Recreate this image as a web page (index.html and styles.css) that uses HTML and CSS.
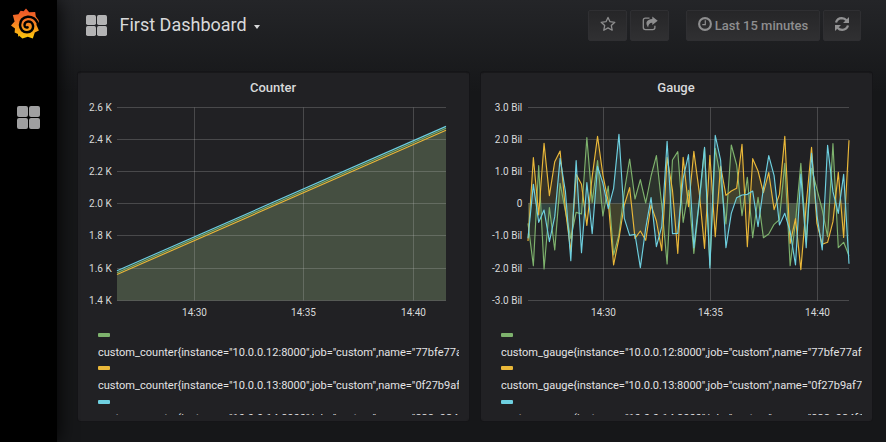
FILE: index.html
```html
<!DOCTYPE html>
<html lang="en">
<head>
<meta charset="utf-8">
<title>First Dashboard</title>
<link rel="stylesheet" href="styles.css">
</head>
<body>
<div class="app">
  <aside class="sidebar">
    <svg class="logo" viewBox="0 0 30 32" width="30" height="32">
      <defs>
        <linearGradient id="flame" x1="0" y1="0" x2="0" y2="1">
          <stop offset="0.1" stop-color="#f05a28"/>
          <stop offset="0.45" stop-color="#f47b26"/>
          <stop offset="1" stop-color="#fdca0a"/>
        </linearGradient>
      </defs>
      <path fill="url(#flame)" d="M16 0.4 L19.2 4.2 L25.2 4.1 L25.8 8.6 Q28.8 11.5 29 14.8 L27 14.5 L26.4 16.8 L28.9 22.4 L24.8 24.6 L22.8 30.6 L17.8 28.8 L12.4 30.4 L8.8 27.4 L8 29.2 L8 26 L4.6 24.6 L5 20.4 L1 17.6 L4.6 13.4 L2.8 7 L8.4 6.2 L10.6 2.8 L13.6 3.3 Z"/>
      <path fill="none" stroke="#000" stroke-width="2.5" stroke-linecap="round" d="M27.5 14.8 C25.5 10.5 21.5 8.6 17.6 8.8 C12.8 9.1 10 12.8 10 17 C10 21.3 13.2 24.3 17 24.3 C21 24.3 23.3 21.4 23.1 18 C22.8 14.8 20.4 13.3 18 13.5 C15.3 13.8 14.2 15.8 14.6 17.6 C15 19.2 16.3 19.9 17.6 19.4"/>
    </svg>
    <svg class="nav-icon" viewBox="0 0 23 23" width="23" height="23">
      <g fill="#a0a0a1"><rect width="11" height="11" rx="2"/><rect x="12" width="11" height="11" rx="2"/><rect y="12" width="11" height="11" rx="2"/><rect x="12" y="12" width="11" height="11" rx="2"/></g>
    </svg>
  </aside>
  <main class="main">
    <header class="navbar">
      <svg class="title-icon" viewBox="0 0 21 21" width="21" height="21">
        <g fill="#b3b3b4"><rect width="10" height="10" rx="1.7"/><rect x="11" width="10" height="10" rx="1.7"/><rect y="11" width="10" height="10" rx="1.7"/><rect x="11" y="11" width="10" height="10" rx="1.7"/></g>
      </svg>
      <h1 class="title">First Dashboard</h1>
      <span class="caret"></span>
      <div class="actions">
        <button class="btn btn-star">
          <svg viewBox="0 0 16 16" width="16" height="16"><path fill="none" stroke="#8e8e8f" stroke-width="1.3" stroke-linejoin="round" d="M8 1.4 L10 5.7 L14.8 6.3 L11.3 9.5 L12.2 14.2 L8 11.9 L3.8 14.2 L4.7 9.5 L1.2 6.3 L6 5.7 Z"/></svg>
        </button>
        <button class="btn btn-share">
          <svg viewBox="0 0 16 16" width="16" height="16"><path fill="none" stroke="#8e8e8f" stroke-width="1.3" d="M7.5 2.2 H3.4 Q1.3 2.2 1.3 4.3 V11.6 Q1.3 13.7 3.4 13.7 H10.8 Q12.9 13.7 12.9 11.6 V9.8"/><path fill="#8e8e8f" d="M10.3 0.5 L15.7 4.8 L10.3 9 V6.7 Q6.5 6.6 6.1 11.5 Q1.3 4 10.3 3 Z"/></svg>
        </button>
        <button class="btn btn-time">
          <svg viewBox="0 0 14 14" width="14" height="14"><circle cx="7" cy="7" r="5.9" fill="none" stroke="#8e8e8f" stroke-width="2.1"/><path fill="none" stroke="#8e8e8f" stroke-width="1.2" d="M7.3 3.2 V7.6 H4.3"/></svg>
          <span>Last 15 minutes</span>
        </button>
        <button class="btn btn-refresh">
          <svg viewBox="0 0 16 16" width="16" height="16"><g fill="none" stroke="#929293" stroke-width="2.3"><path d="M2 6.5 Q3.3 2.3 7.8 2.2 Q10.7 2.2 12.4 4.3"/><path d="M14 9.5 Q12.7 13.7 8.2 13.8 Q5.3 13.8 3.6 11.7"/></g><path fill="#929293" d="M15 1 V7 H9 Z M1 15 V9 H7 Z"/></svg>
        </button>
      </div>
    </header>
    <div class="panels">
      <section class="panel">
        <h2 class="panel-title">Counter</h2>
        <svg class="chart" id="counter" width="391" height="224"></svg>
        <div class="legend">
          <div class="legend-item"><i class="swatch green"></i><span>custom_counter{instance="10.0.0.12:8000",job="custom",name="77bfe77af</span></div>
          <div class="legend-item"><i class="swatch yellow"></i><span>custom_counter{instance="10.0.0.13:8000",job="custom",name="0f27b9af7</span></div>
          <div class="legend-item"><i class="swatch blue"></i><span>custom_counter{instance="10.0.0.14:8000",job="custom",name="838e924f1</span></div>
        </div>
      </section>
      <section class="panel">
        <h2 class="panel-title">Gauge</h2>
        <svg class="chart" id="gauge" width="391" height="224"></svg>
        <div class="legend">
          <div class="legend-item"><i class="swatch green"></i><span>custom_gauge{instance="10.0.0.12:8000",job="custom",name="77bfe77af</span></div>
          <div class="legend-item"><i class="swatch yellow"></i><span>custom_gauge{instance="10.0.0.13:8000",job="custom",name="0f27b9af7</span></div>
          <div class="legend-item"><i class="swatch blue"></i><span>custom_gauge{instance="10.0.0.14:8000",job="custom",name="838e924f1</span></div>
        </div>
      </section>
    </div>
  </main>
</div>
<script src="charts.js"></script>
</body>
</html>
```
FILE: styles.css
```css
* { box-sizing: border-box; }
body { margin: 0; background: #161719; color: #d8d9da; font-family: Roboto, "Liberation Sans", sans-serif; }
.app { display: flex; width: 886px; height: 442px; overflow: hidden; }
.sidebar { width: 57px; flex: none; background: #000; box-shadow: 0 0 20px #000; display: flex; flex-direction: column; align-items: center; padding-top: 8px; z-index: 1; }
.logo { display: block; margin-right: 7px; }
.nav-icon { display: block; margin-top: 66px; }
.main { flex: 1; background: linear-gradient(180deg, #242528 0, #161719 92px); }
.navbar { display: flex; align-items: center; height: 50px; padding: 0 25px 0 29px; }
.title { margin: 0 0 0 12.5px; font-size: 18px; font-weight: 400; line-height: 24px; }
.caret { margin: 4px 0 0 7px; border: 3.5px solid transparent; border-top: 4px solid #d8d9da; border-bottom: 0; }
.actions { display: flex; margin-left: auto; }
.btn { display: flex; align-items: center; justify-content: center; height: 31px; margin: 0 0 0 3px; padding: 0; border: 1px solid #2f2f32; border-radius: 2px; background: linear-gradient(180deg, #262628, #303032); color: #8e8e8f; font: 500 13px Roboto, sans-serif; }
.btn svg { display: block; margin-top: -2px; }
.btn-star, .btn-share { width: 39px; }
.btn-time { width: 134px; margin-left: 17px; gap: 3px; }
.btn-time span { padding-top: 1px; }
.btn-refresh { width: 38px; }
.panels { display: flex; gap: 12px; padding: 22px 0 0 21px; }
.panel { width: 391px; height: 349px; background: #212124; border: 1px solid #212124; border-top-color: #18181a; border-radius: 3px; box-shadow: 0 0 0 1px #151518; }
.panel-title { margin: 0; height: 27px; padding-right: 1px; font-size: 13px; font-weight: 500; line-height: 29px; text-align: center; }
.chart { display: block; margin: 0 -1px; }
.chart text { fill: #d8d9da; font-size: 10px; }
.legend { height: 91px; margin: 0 9px 0 19px; overflow: hidden; color: #e3e3e4; font-size: 11.04px; line-height: 20px; white-space: nowrap; }
.legend-item { height: 33.4px; padding-top: 9px; }
.legend-item span { display: block; padding-top: 6px; }
.legend-item:last-child span { padding-top: 5px; }
.swatch { display: block; width: 12px; height: 4px; border-radius: 1px; }
.green { background: #7eb26d; }
.yellow { background: #eab839; }
.blue { background: #6ed0e0; }
```
FILE: charts.js
```js
const COLORS = ['#7eb26d', '#eab839', '#6ed0e0'];
const GRID_ROWS = [7.5, 39.5, 71.5, 103.5, 135.5, 168.5, 200.5];

function drawChart(id, opts) {
  const { left, right, labels, times, series, base } = opts;
  let areas = '', lines = '', grid = '', text = '';
  series.forEach((ys, n) => {
    const step = (right - left) / (ys.length - 1);
    const pts = ys.map((y, i) => [left + i * step, y]);
    const line = pts.map(p => p.map(v => v.toFixed(2)).join(',')).join(' ');
    // Fill each run on one side of the baseline as its own closed shape.
    let d = `M${left} ${base}L${pts[0].join(' ')}`;
    for (let i = 1; i < pts.length; i++) {
      const [x0, y0] = pts[i - 1];
      const [x1, y1] = pts[i];
      if ((y0 - base) * (y1 - base) < 0) {
        const x = x0 + (x1 - x0) * (base - y0) / (y1 - y0);
        d += `L${x} ${base}ZM${x} ${base}`;
      }
      d += `L${x1} ${y1}`;
    }
    d += `L${right} ${base}Z`;
    areas += `<path d="${d}" fill="${COLORS[n]}" fill-opacity="${opts.fill}"/>`;
    lines += `<polyline points="${line}" fill="none" stroke="${COLORS[n]}" stroke-width="1.15" stroke-linejoin="round"/>`;
  });
  GRID_ROWS.forEach((y, i) => {
    grid += `<path d="M${left} ${y}H${right}"/>`;
    text += `<text x="${opts.labelEnd}" y="${y + 3.5}" text-anchor="end">${labels[i]}</text>`;
  });
  times.forEach(([x, label]) => {
    grid += `<path d="M${x} 7.5V200.5"/>`;
    text += `<text x="${x}" y="216" text-anchor="middle">${label}</text>`;
  });
  document.getElementById(id).innerHTML =
    `${areas}<g stroke="#c8c8c8" stroke-opacity="0.24">${grid}</g>${lines}${text}`;
}

drawChart('counter', {
  left: 39, right: 368, labelEnd: 33.7, base: 200.5, fill: 0.11,
  labels: ['2.6 K', '2.4 K', '2.2 K', '2.0 K', '1.8 K', '1.6 K', '1.4 K'],
  times: [[116.5, '14:30'], [225.5, '14:35'], [335.5, '14:40']],
  series: [[172.7, 28.3], [174.5, 30.2], [170.8, 26.4]]
});

// Gauge samples, in thirds of a pixel.
const gauge = [
  [385,512,212,522,338,465,265,350,430,352,357,128,322,197,363,273,480,420,290,192,312,254,324,243,182,330,507,195,170,382,286,475,325,160,510,160,250,387,150,210,362,247,428,307,428,417,388,374,205,512,380,205,440,220,282,345,425,146,458,442,482],
  [438,188,360,145,302,200,168,345,470,238,268,391,245,124,240,320,510,430,330,278,430,408,436,330,378,467,187,285,475,187,335,169,290,460,181,425,213,301,288,280,148,455,191,228,293,233,344,298,124,445,371,524,330,157,385,448,442,380,232,427,136],
  [430,268,382,345,440,365,190,290,497,197,473,263,416,214,265,341,280,118,370,421,418,518,400,308,455,395,139,416,415,250,179,458,318,157,519,121,195,458,355,308,300,298,288,395,280,182,242,390,355,410,510,237,458,175,360,465,151,290,355,238,506]
].map(s => s.map(v => (v - 15) / 3));

drawChart('gauge', {
  left: 47, right: 368, labelEnd: 41.3, base: 103.5, fill: 0.12,
  labels: ['3.0 Bil', '2.0 Bil', '1.0 Bil', '0', '-1.0 Bil', '-2.0 Bil', '-3.0 Bil'],
  times: [[122.5, '14:30'], [229.5, '14:35'], [336.5, '14:40']],
  series: gauge
});
```
